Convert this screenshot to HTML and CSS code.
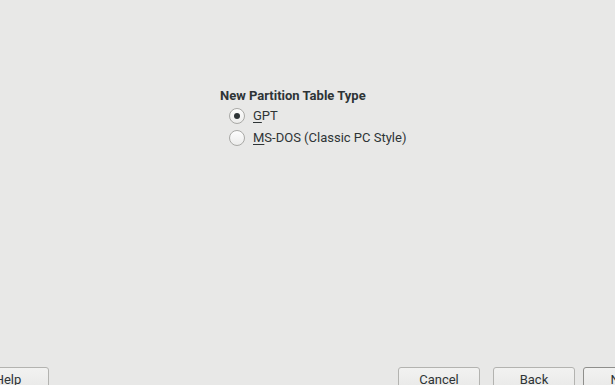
FILE: index.html
```html
<!DOCTYPE html>
<html>
<head>
<meta charset="utf-8">
<link rel="stylesheet" href="styles.css">
</head>
<body>
<div class="page">
  <div class="content">
    <div class="group">
      <div class="title">New Partition Table Type</div>
      <label class="radio-row">
        <span class="radio checked"></span>
        <span class="label"><u>G</u>PT</span>
      </label>
      <label class="radio-row">
        <span class="radio"></span>
        <span class="label"><u>M</u>S-DOS (Classic PC Style)</span>
      </label>
    </div>
  </div>
  <div class="buttons">
    <div class="btn help">Help</div>
    <div class="spacer"></div>
    <div class="btn">Cancel</div>
    <div class="btn back">Back</div>
    <div class="btn next">Next</div>
  </div>
</div>
</body>
</html>
```
FILE: styles.css
```css
html, body {
  margin: 0;
  padding: 0;
  width: 615px;
  height: 385px;
  overflow: hidden;
  background: #e8e8e7;
  font-family: Roboto, "Noto Sans", sans-serif;
  font-size: 13px;
  color: #2e3436;
}
.page {
  display: flex;
  flex-direction: column;
  height: 385px;
}
.content {
  flex: 1;
  padding: 88px 0 0 220px;
}
.title {
  font-weight: bold;
  line-height: 15px;
  margin-bottom: 1px;
}
.radio-row {
  display: flex;
  align-items: center;
  gap: 8px;
  margin-left: 9px;
  height: 22px;
}
.radio {
  box-sizing: border-box;
  width: 16px;
  height: 16px;
  margin-top: 1px;
  border-radius: 50%;
  border: 1px solid #a9a9a6;
  background: linear-gradient(#fdfdfd, #ececeb);
  position: relative;
}
.radio.checked::after {
  content: "";
  position: absolute;
  left: 4px;
  top: 4px;
  width: 6px;
  height: 6px;
  border-radius: 50%;
  background: #2e3436;
}
.label u {
  text-decoration: underline;
  text-underline-offset: 2px;
}
.buttons {
  display: flex;
  height: 18px;
  margin-left: -33px;
  margin-right: -50px;
}
.btn {
  box-sizing: border-box;
  width: 82px;
  height: 30px;
  border: 1px solid #b3b3b0;
  border-radius: 3px;
  background: linear-gradient(#f2f2f1, #e6e6e5);
  text-align: center;
  padding-top: 4px;
  line-height: 15px;
  color: #2e3436;
}
.spacer { flex: 1; }
.back { margin-left: 13px; }
.next { margin-left: 8px; border-color: #8f8f8c; }
```
